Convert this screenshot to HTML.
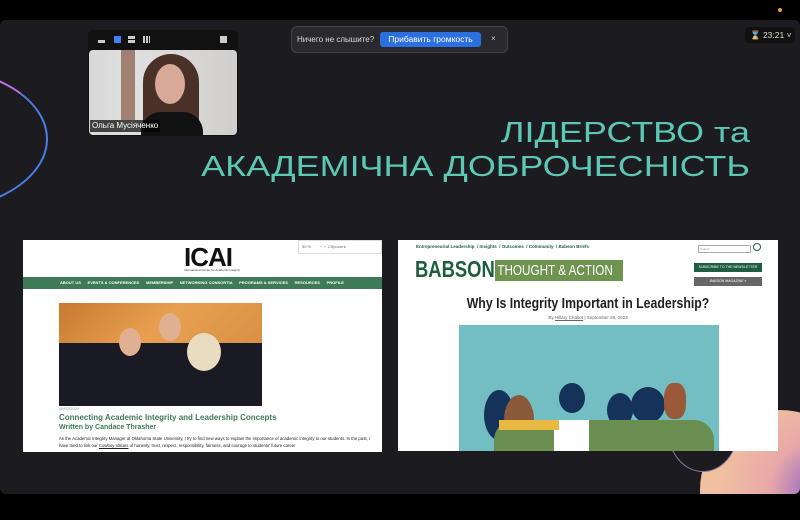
<!DOCTYPE html>
<html><head><meta charset="utf-8"><style>
*{margin:0;padding:0;box-sizing:border-box}
body{width:800px;height:520px;background:#000;position:relative;overflow:hidden;font-family:"Liberation Sans",sans-serif}
.abs{position:absolute}
</style></head><body>
<div class="abs" style="left:0;top:20px;width:800px;height:474px;background:#1c1b1f;border-radius:6px;overflow:hidden">
 <div class="abs" style="left:-190px;top:46px;width:238px;height:146px;border-radius:50%;border:2px solid #4a7fe8;border-top-color:#c070e0;"></div>
 <div class="abs" style="left:700px;top:390px;width:160px;height:160px;border-radius:50%;background:radial-gradient(circle at 75% 50%,#8a60c8 0,#e8a8a8 35%,#f0c0a0 70%)"></div>
 <div class="abs" style="left:668px;top:370px;width:70px;height:82px;border-radius:50%;border:1px solid #8a7aa0;background:#1c1b1f"></div>
</div>
<div class="abs" style="left:778px;top:8px;width:4px;height:4px;border-radius:2px;background:#e8a040"></div>
<!-- video tile -->
<div class="abs" style="left:88px;top:30px;width:150px;height:106px;background:#111;border-radius:5px"></div>
<div class="abs" style="left:98px;top:40px;width:7px;height:3px;background:#ccc"></div>
<div class="abs" style="left:114px;top:36px;width:7px;height:7px;background:#3b82f6"></div>
<div class="abs" style="left:128px;top:36px;width:7px;height:7px;border-top:3px solid #ccc;border-bottom:3px solid #ccc"></div>
<div class="abs" style="left:143px;top:36px;width:7px;height:7px;background:repeating-linear-gradient(90deg,#ccc 0 2px,transparent 2px 3px)"></div>
<div class="abs" style="left:220px;top:36px;width:7px;height:7px;background:#ccc"></div>
<div class="abs" style="left:89px;top:50px;width:148px;height:85px;border-radius:4px;background:linear-gradient(90deg,#d8d8d8 0,#e0e0e0 30%,#d0cfcd 100%);overflow:hidden">
 <div class="abs" style="left:32px;top:0;width:14px;height:70px;background:#a08070"></div>
 <div class="abs" style="left:54px;top:4px;width:56px;height:90px;border-radius:28px 28px 0 0;background:#4a3128"></div>
 <div class="abs" style="left:66px;top:14px;width:30px;height:40px;border-radius:50%;background:#d8a898"></div>
 <div class="abs" style="left:52px;top:62px;width:62px;height:30px;border-radius:20px 20px 0 0;background:#111"></div>
</div>
<div class="abs" style="left:90px;top:120px;width:70px;height:12px;background:rgba(0,0,0,.7);color:#fff;font-size:8px;line-height:12px;padding-left:2px">Ольга Мусіяченко</div>
<!-- toast -->
<div class="abs" style="left:291px;top:26px;width:217px;height:27px;background:#2a292d;border:1px solid #444;border-radius:6px"></div>
<div class="abs" style="left:297px;top:35px;font-size:8px;color:#ddd">Ничего не слышите?</div>
<div class="abs" style="left:380px;top:32px;width:101px;height:15px;background:#2b6fe0;border-radius:3px;color:#fff;font-size:8.5px;line-height:15px;text-align:center">Прибавить громкость</div>
<div class="abs" style="left:491px;top:34px;font-size:8px;color:#ccc">×</div>
<div class="abs" style="left:745px;top:27px;width:50px;height:16px;background:#111;border-radius:4px;color:#ddd;font-size:8.5px;line-height:16px;padding-left:5px">⌛ 23:21 ˅</div>
<!-- title -->
<div class="abs" style="left:150px;top:116px;width:600px;text-align:right;color:#5cc8b4;font-size:29px;line-height:34px;transform:scaleX(1.24);transform-origin:right">ЛІДЕРСТВО та<br>АКАДЕМІЧНА ДОБРОЧЕСНІСТЬ</div>
<!-- left screen -->
<div class="abs" style="left:23px;top:240px;width:359px;height:212px;background:#fff;overflow:hidden">
 <div class="abs" style="left:161px;top:2px;font-size:26px;font-weight:bold;color:#111;letter-spacing:-1px">ICAI</div>
 <div class="abs" style="left:161px;top:28px;font-size:3px;color:#333">International Center for Academic Integrity</div>
 <div class="abs" style="left:275px;top:0;width:84px;height:14px;border:1px solid #ddd;background:#fff;font-size:4px;color:#666;padding:3px">50 %&nbsp;&nbsp;&nbsp;&nbsp;&nbsp;&nbsp;&nbsp;&nbsp;− +&nbsp;&nbsp;Сбросить</div>
 <div class="abs" style="left:0;top:37px;width:359px;height:12px;background:#3e7a57;color:#fff;font-size:4px;font-weight:bold;line-height:12px;padding-left:37px;white-space:nowrap">ABOUT US &nbsp;&nbsp;&nbsp;&nbsp; EVENTS &amp; CONFERENCES &nbsp;&nbsp;&nbsp;&nbsp; MEMBERSHIP &nbsp;&nbsp;&nbsp;&nbsp; NETWORKING CONSORTIA &nbsp;&nbsp;&nbsp;&nbsp; PROGRAMS &amp; SERVICES &nbsp;&nbsp;&nbsp;&nbsp; RESOURCES &nbsp;&nbsp;&nbsp;&nbsp; PROFILE</div>
 <div class="abs" style="left:36px;top:63px;width:203px;height:103px;background:linear-gradient(135deg,#c87a30,#e8a050 40%,#d08840);overflow:hidden">
  <div class="abs" style="left:0;top:40px;width:203px;height:63px;background:#1a1a24"></div>
  <div class="abs" style="left:60px;top:25px;width:22px;height:28px;border-radius:50%;background:#e0b090"></div>
  <div class="abs" style="left:100px;top:10px;width:22px;height:28px;border-radius:50%;background:#e0b090"></div>
  <div class="abs" style="left:128px;top:30px;width:34px;height:38px;border-radius:50%;background:#e8dcc0"></div>
 </div>
 <div class="abs" style="left:36px;top:166px;font-size:4px;color:#999">09/02/2024</div>
 <div class="abs" style="left:36px;top:173px;font-size:8px;color:#3e7a57;font-weight:bold">Connecting Academic Integrity and Leadership Concepts</div>
 <div class="abs" style="left:36px;top:184px;font-size:7px;color:#3e7a57;font-weight:bold">Written by Candace Thrasher</div>
 <div class="abs" style="left:36px;top:195px;width:320px;font-size:4.3px;line-height:7px;color:#222">As the Academic Integrity Manager at Oklahoma State University, I try to find new ways to explain the importance of academic integrity to our students. In the past, I have tried to link our <u>Cowboy Values</u> of honesty, trust, respect, responsibility, fairness, and courage to students' future career</div>
</div>
<!-- right screen -->
<div class="abs" style="left:398px;top:240px;width:380px;height:211px;background:#fff;overflow:hidden">
 <div class="abs" style="left:18px;top:4px;font-size:4.5px;font-weight:bold;color:#1e5e3e;white-space:nowrap">Entrepreneurial Leadership &nbsp;/ Insights &nbsp;/ Outcomes &nbsp;/ Community &nbsp;/ Babson Briefs</div>
 <div class="abs" style="left:17px;top:16px;font-size:23px;font-weight:bold;color:#1e5e3e;transform:scaleX(.8);transform-origin:left;white-space:nowrap">BABSON</div>
 <div class="abs" style="left:97px;top:20px;width:128px;height:21px;background:#6f9450;overflow:hidden">
  <div style="color:#fff;font-size:15px;line-height:21px;padding-left:3px;white-space:nowrap;transform:scaleX(.78);transform-origin:left">THOUGHT &amp; ACTION</div>
 </div>
 <div class="abs" style="left:300px;top:5px;width:53px;height:8px;border:1px solid #aaa;font-size:3px;color:#999;padding:1px">Search</div>
 <div class="abs" style="left:355px;top:3px;width:8px;height:8px;border:1.5px solid #1e5e3e;border-radius:50%"></div>
 <div class="abs" style="left:296px;top:23px;width:68px;height:9px;background:#1e5e3e;color:#fff;font-size:3.5px;line-height:9px;text-align:center">SUBSCRIBE TO THE NEWSLETTER</div>
 <div class="abs" style="left:296px;top:37px;width:68px;height:9px;background:#666;color:#fff;font-size:3.5px;line-height:9px;text-align:center;font-style:italic">BABSON MAGAZINE »</div>
 <div class="abs" style="left:0;top:55px;width:380px;text-align:center;font-size:15px;font-weight:bold;color:#222;transform:scaleX(.82)">Why Is Integrity Important in Leadership?</div>
 <div class="abs" style="left:0;top:75px;width:380px;text-align:center;font-size:4.5px;color:#666">By <u>Hillary Chabot</u> | September 28, 2023</div>
 <div class="abs" style="left:61px;top:85px;width:260px;height:126px;background:#72bec3;overflow:hidden">
  <div class="abs" style="left:25px;top:65px;width:30px;height:50px;border-radius:50%;background:#15335a"></div>
  <div class="abs" style="left:45px;top:70px;width:30px;height:50px;border-radius:50%;background:#8a5a3a"></div>
  <div class="abs" style="left:100px;top:58px;width:26px;height:30px;border-radius:50%;background:#15335a"></div>
  <div class="abs" style="left:148px;top:68px;width:26px;height:34px;border-radius:50%;background:#15335a"></div>
  <div class="abs" style="left:172px;top:62px;width:34px;height:36px;border-radius:50%;background:#15335a"></div>
  <div class="abs" style="left:205px;top:58px;width:22px;height:36px;border-radius:40%;background:#9a5a3a"></div>
  <div class="abs" style="left:35px;top:95px;width:220px;height:40px;border-radius:20px 20px 0 0;background:#6a8e50"></div>
  <div class="abs" style="left:95px;top:95px;width:35px;height:40px;background:#fff"></div>
  <div class="abs" style="left:40px;top:95px;width:60px;height:10px;background:#e8b840"></div>
 </div>
</div>
</body></html>
